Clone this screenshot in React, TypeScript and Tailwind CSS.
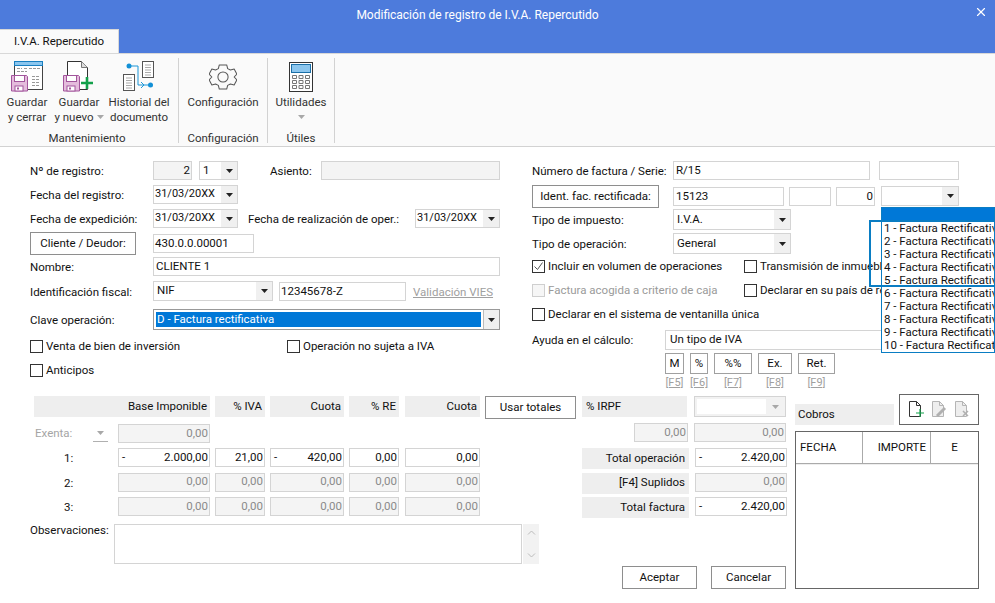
import React from "react";
import { X } from "lucide-react";

const font = { fontFamily: 'Roboto, "Noto Sans", sans-serif' };

type P = { className?: string; children?: React.ReactNode };

const Arrow = ({ light }: { light?: boolean }) => (
  <svg width="7" height="4" viewBox="0 0 7 4" className="shrink-0">
    <path d="M0 0h7L3.5 4z" fill={light ? "#a8a8a8" : "#222"} />
  </svg>
);

const Label = ({ className = "", children }: P) => (
  <span className={`whitespace-nowrap text-[#111] ${className}`}>{children}</span>
);

const Input = ({ className = "", children, off }: P & { off?: boolean }) => (
  <div
    className={`flex h-[19px] shrink-0 items-center justify-between overflow-hidden border border-[#d4d4d4] px-[1px] leading-none ${
      off ? "bg-[#f4f4f4] text-[#8a8a8a]" : "bg-white text-[#111]"
    } ${className}`}
  >
    {children}
  </div>
);

const Num = ({ className = "", off, sign, children }: P & { off?: boolean; sign?: boolean }) => (
  <Input className={className} off={off}>
    <span className="pl-[2px]">{sign ? "-" : ""}</span>
    <span>{children}</span>
  </Input>
);

const Select = ({ className = "", children }: P) => (
  <div className={`flex shrink-0 items-stretch border border-[#d4d4d4] bg-white ${className}`}>
    <div className="flex flex-1 items-center overflow-hidden pl-[3px] text-[#111]">{children}</div>
    <div className="flex w-[16px] items-center justify-center bg-[#f0f0f0]">
      <Arrow />
    </div>
  </div>
);

const DateSelect = () => (
  <Select className="h-[19px] w-[85px]">
    <span className="-ml-[2px] text-[11px]">31/03/20XX</span>
  </Select>
);

const Btn = ({ className = "", children }: P) => (
  <div
    className={`flex shrink-0 items-center justify-center border border-[#8e8e8e] bg-white whitespace-nowrap text-[#111] ${className}`}
  >
    {children}
  </div>
);

const Check = ({ checked, off, className = "", children }: P & { checked?: boolean; off?: boolean }) => (
  <div className={`flex items-center gap-[3px] ${className}`}>
    <div
      className={`flex h-[13px] w-[13px] shrink-0 items-center justify-center border ${
        off ? "border-[#cfcfcf] bg-[#f6f6f6]" : "border-[#333] bg-white"
      }`}
    >
      {checked && (
        <svg width="11" height="11" viewBox="0 0 11 11">
          <path d="M1.5 5.5l3 3 5-7" fill="none" stroke="#555" strokeWidth="1" />
        </svg>
      )}
    </div>
    <span className={`whitespace-nowrap ${off ? "text-[#9a9a9a]" : "text-[#111]"}`}>{children}</span>
  </div>
);

const Head = ({ className = "", children }: P) => (
  <div className={`flex h-[21px] shrink-0 items-center justify-end bg-[#eeeeee] pr-[3px] text-[#111] ${className}`}>
    {children}
  </div>
);

const Floppy = ({ x, y }: { x: number; y: number }) => (
  <g transform={`translate(${x} ${y})`}>
    <path d="M.5.5h15l1 1v14.5H.5z" fill="#e4bcdc" stroke="#a2559c" />
    <rect x="3.5" y=".5" width="10" height="6" fill="#fff" stroke="#a2559c" />
    <rect x="4" y="11" width="8" height="5" fill="#fff" stroke="#a2559c" />
    <rect x="6" y="12.5" width="2" height="2" fill="#a2559c" />
  </g>
);

const IconSaveClose = () => (
  <svg width="32" height="31" viewBox="0 0 32 31">
    <rect x="3.5" y=".5" width="28" height="28" fill="#fff" stroke="#444" />
    <rect x="3" y="0" width="29" height="5" fill="#1a7fc0" />
    <rect x="4" y="1" width="27" height="3" fill="#8cc6ee" />
    <path d="M6 7.5h5M13 7.5h3M18 7.5h11M6 10.5h10M21 15.5h8M21 18.5h8M21 21.5h8M21 24.5h8" stroke="#999" strokeDasharray="3 1" />
    <Floppy x={0} y={14} />
  </svg>
);

const IconSaveNew = () => (
  <svg width="32" height="31" viewBox="0 0 32 31">
    <path d="M4.5 15V.5h14l6 6V28.5H16" fill="#fff" stroke="#333" />
    <path d="M18.5.5v6h6" fill="#ddd" stroke="#777" />
    <Floppy x={0} y={14} />
    <path d="M18 22h12M24 16v12" stroke="#13a14b" strokeWidth="2.600" />
  </svg>
);

const IconHistory = () => (
  <svg width="32" height="31" viewBox="0 0 32 31">
    <path d="M6 5h9v19h12" fill="none" stroke="#1b96d8" />
    <circle cx="6" cy="5" r="2.500" fill="#1290d6" />
    <circle cx="27.500" cy="24" r="2.500" fill="#1290d6" />
    <path d="M18 21l3 3-3 3" fill="none" stroke="#1b96d8" />
    <rect x="19.500" y=".5" width="11" height="16" fill="#fff" stroke="#555" />
    <path d="M22 4h6M22 6.500h6M22 9h6M22 11.500h6M22 14h6" stroke="#aaa" />
    <rect x="0.500" y="13.500" width="11" height="16" fill="#fff" stroke="#555" />
    <path d="M3 17h6M3 19.500h6M3 22h6M3 24.500h6M3 27h6" stroke="#aaa" />
  </svg>
);

const IconGear = () => (
  <svg width="28" height="26" viewBox="0 0 30 28" fill="none" stroke="#555" strokeWidth="1.100">
    <path d="M11 1h8l1 4 3 1.500 4-1 3 5.500-3 3 3 3-3 5.500-4-1-3 1.500-1 4h-8l-1-4-3-1.500-4 1L0 17l3-3-3-3 3-5.500 4 1L10 5z" strokeLinejoin="round" />
    <circle cx="15" cy="14" r="5.500" />
  </svg>
);

const IconCalc = () => (
  <svg width="24" height="30" viewBox="0 0 24 30">
    <rect x=".5" y=".5" width="23" height="29" fill="#fff" stroke="#333" />
    <rect x="2.500" y="2.500" width="19" height="8" fill="#8cc6ee" stroke="#1a6fa8" />
    <path d="M3.500 13.500h4v3h-4zM10 13.500h4v3h-4zM16.500 13.500h4v3h-4zM3.500 18.500h4v3h-4zM10 18.500h4v3h-4zM16.500 18.500h4v3h-4zM3.500 23.500h4v3h-4zM10 23.500h4v3h-4zM16.500 23.500h4v3h-4z" fill="#fff" stroke="#777" />
  </svg>
);

const DocIcon = ({ mark, off }: { mark: "plus" | "pen" | "x"; off?: boolean }) => (
  <svg width="17" height="17" viewBox="0 0 17 17">
    <path d="M1.500.5h7l4 4v11h-11z" fill={off ? "#eee" : "#fff"} stroke={off ? "#b5b5b5" : "#333"} />
    <path d="M8.500.5v4h4" fill="none" stroke={off ? "#b5b5b5" : "#333"} />
    {mark === "plus" && <path d="M8 12h8M12 8v8" stroke="#13a14b" strokeWidth="1.200" />}
    {mark === "pen" && <path d="M6 15l8-8" stroke="#b0b0b0" strokeWidth="3" />}
    {mark === "x" && <path d="M9 10l5 5M14 10l-5 5" stroke="#b0b0b0" strokeWidth="1.500" />}
  </svg>
);

const RibbonBtn = ({ icon, className = "", children }: P & { icon: React.ReactNode }) => (
  <div className={`flex flex-col items-center text-center text-[#333] ${className}`}>
    <div className="flex h-[36px] items-center pt-[1px]">{icon}</div>
    <div className="mt-[0.500px] leading-[15px] whitespace-nowrap">{children}</div>
  </div>
);

const RibbonGroup = ({ title, className = "", children }: P & { title: string }) => (
  <div className={`flex h-[85px] flex-col border-r border-[#d2d2d2] ${className}`}>
    <div className="flex flex-1 justify-center">{children}</div>
    <div className="text-center leading-[10px] text-[#333]">{title}</div>
  </div>
);

const items = [1, 2, 3, 4, 5, 6, 7, 8, 9];

export default function App() {
  return (
    <div className="relative h-[603px] w-[995px] overflow-hidden bg-white text-[11.5px]" style={font}>
      {/* barra de titulo */}
      <div className="relative h-[29px] bg-[#4d7bdc]">
        <div className="pr-[40px] pt-[9px] text-center text-[12px] leading-none text-white">
          Modificación de registro de I.V.A. Repercutido
        </div>
        <div className="absolute right-[7px] top-[5px] flex text-white">
          <X size={14} strokeWidth={2} />
        </div>
      </div>
      <div className="flex h-[24px] bg-[#4d7bdc]">
        <div className="flex w-[119px] items-center justify-center border-t border-r border-[#d8d8d8] bg-[#fafafa] text-[#111]">
          I.V.A. Repercutido
        </div>
      </div>

      {/* ribbon */}
      <div className="flex h-[94px] items-start border-b border-[#d2d2d2] border-t border-t-[#d8d8d8] bg-[#fafafa] pt-[4px]">
        <RibbonGroup title="Mantenimiento" className="w-[179px] pr-[4px]">
          <RibbonBtn icon={<IconSaveClose />} className="w-[52px]">
            Guardar
            <br />y cerrar
          </RibbonBtn>
          <RibbonBtn icon={<IconSaveNew />} className="w-[52px]">
            Guardar
            <br />
            <span className="inline-flex items-center gap-[3px]">
              y nuevo <Arrow light />
            </span>
          </RibbonBtn>
          <RibbonBtn icon={<IconHistory />} className="w-[68px]">
            Historial del
            <br />
            documento
          </RibbonBtn>
        </RibbonGroup>
        <RibbonGroup title="Configuración" className="w-[89px]">
          <RibbonBtn icon={<IconGear />}>Configuración</RibbonBtn>
        </RibbonGroup>
        <RibbonGroup title="Útiles" className="w-[67px]">
          <RibbonBtn icon={<IconCalc />}>
            Utilidades
            <div className="flex h-[15px] items-center justify-center">
              <Arrow light />
            </div>
          </RibbonBtn>
        </RibbonGroup>
      </div>

      {/* datos */}
      <div className="flex pt-[14px]">
        <div className="ml-[30px] flex w-[470px] flex-col">
          <div className="flex h-[24px] items-start">
            <Label className="mt-[2px] w-[123px]">Nº de registro:</Label>
            <Num className="w-[39px] text-[#111]" off>
              2
            </Num>
            <Select className="ml-[7px] h-[19px] w-[39px]">1</Select>
            <Label className="ml-[32px] mt-[2px] w-[51px]">Asiento:</Label>
            <Input className="w-[179px]" off />
          </div>
          <div className="flex h-[24px] items-start">
            <Label className="mt-[2px] w-[123px]">Fecha del registro:</Label>
            <DateSelect />
          </div>
          <div className="flex h-[21px] items-start">
            <Label className="mt-[2px] w-[123px]">Fecha de expedición:</Label>
            <DateSelect />
            <Label className="ml-[10px] mt-[2px] w-[167px]">Fecha de realización de oper.:</Label>
            <DateSelect />
          </div>
          <div className="flex h-[27px] items-center">
            <Btn className="h-[23px] w-[106px]">Cliente / Deudor:</Btn>
            <Input className="ml-[17px] w-[101px]">430.0.0.00001</Input>
          </div>
          <div className="flex h-[24px] items-start">
            <Label className="mt-[2px] w-[123px]">Nombre:</Label>
            <Input className="w-[347px] pl-[2px]">CLIENTE 1</Input>
          </div>
          <div className="flex h-[28px] items-start">
            <Label className="mt-[3px] w-[123px]">Identificación fiscal:</Label>
            <Select className="h-[20px] w-[120px]">NIF</Select>
            <Input className="ml-[6px] mt-[1px] w-[127px]">12345678-Z</Input>
            <span className="ml-[7px] mt-[3px] whitespace-nowrap text-[#a0a0a0] underline">Validación VIES</span>
          </div>
          <div className="flex h-[29px] items-start">
            <Label className="mt-[3px] w-[123px]">Clave operación:</Label>
            <div className="flex h-[21px] w-[347px] items-stretch border border-[#999] bg-white">
              <div className="m-[2px] flex flex-1 items-center bg-[#0078d7] pl-[1px] text-white">
                D - Factura rectificativa
              </div>
              <div className="flex w-[16px] items-center justify-center border-l border-[#bbb] bg-[#f0f0f0]">
                <Arrow />
              </div>
            </div>
          </div>
          <div className="flex h-[24px] items-start">
            <Check className="w-[257px]">Venta de bien de inversión</Check>
            <Check>Operación no sujeta a IVA</Check>
          </div>
          <Check>Anticipos</Check>
        </div>

        <div className="ml-[32px] flex flex-col">
          <div className="flex h-[24px] items-start">
            <Label className="mt-[2px] w-[141px]">Número de factura / Serie:</Label>
            <Input className="w-[197px] pl-[2px]">R/15</Input>
            <Input className="ml-[9px] w-[80px]" />
          </div>
          <div className="flex h-[24px] items-start">
            <Btn className="h-[23px] w-[127px]">Ident. fac. rectificada:</Btn>
            <Input className="ml-[14px] mt-[2px] w-[111px] pl-[2px]">15123</Input>
            <Input className="ml-[5px] mt-[2px] w-[42px]" />
            <Input className="ml-[5px] mt-[2px] w-[39px] justify-end">0</Input>
            <Select className="ml-[6px] mt-[1px] h-[20px] w-[78px]" />
          </div>
          <div className="flex h-[24px] items-start">
            <Label className="mt-[3px] w-[141px]">Tipo de impuesto:</Label>
            <Select className="h-[21px] w-[118px]">I.V.A.</Select>
          </div>
          <div className="flex h-[25px] items-start">
            <Label className="mt-[3px] w-[141px]">Tipo de operación:</Label>
            <Select className="h-[21px] w-[118px]">General</Select>
          </div>
          <div className="flex h-[24px] items-start">
            <Check checked className="w-[212px]">
              Incluir en volumen de operaciones
            </Check>
            <Check>Transmisión de inmuebles</Check>
          </div>
          <div className="flex h-[24px] items-start">
            <Check off className="w-[212px]">
              Factura acogida a criterio de caja
            </Check>
            <Check>Declarar en su país de residencia</Check>
          </div>
          <div className="flex h-[24px] items-start">
            <Check>Declarar en el sistema de ventanilla única</Check>
          </div>
          <div className="flex h-[23px] items-start">
            <Label className="mt-[2px] w-[133px]">Ayuda en el cálculo:</Label>
            <div className="flex h-[20px] w-[230px] items-center border border-[#d4d4d4] pl-[4px] text-[#111]">
              Un tipo de IVA
            </div>
          </div>
          <div className="ml-[133px] flex gap-[6px]">
            {[
              ["M", "[F5]", "w-[19px]"],
              ["%", "[F6]", "w-[18px]"],
              ["%%", "[F7]", "w-[38px]"],
              ["Ex.", "[F8]", "w-[34px]"],
              ["Ret.", "[F9]", "w-[37px]"],
            ].map(([t, k, w]) => (
              <div key={k} className={`flex flex-col items-center ${w}`}>
                <Btn className="h-[21px] w-full border-[#a0a0a0]">{t}</Btn>
                <span className="mt-[2px] text-[11px] leading-[14px] text-[#a0a0a0] underline">{k}</span>
              </div>
            ))}
          </div>
        </div>
      </div>

      {/* importes */}
      <div className="absolute left-0 top-[394px] flex w-full">
        <div className="ml-[34px] flex w-[542px] flex-col">
          <div className="mt-[2px] flex gap-[5px]">
            <Head className="w-[176px]">Base Imponible</Head>
            <Head className="w-[50px]">% IVA</Head>
            <Head className="w-[74px]">Cuota</Head>
            <Head className="w-[50px]">% RE</Head>
            <Head className="ml-[1px] w-[75px]">Cuota</Head>
            <Btn className="h-[23px] w-[91px]">Usar totales</Btn>
          </div>
          <div className="mt-[5px] flex h-[24px] items-start">
            <span className="ml-[1px] mt-[1px] w-[58px] text-[#a5a5a5]">Exenta:</span>
            <div className="flex h-[18px] w-[15px] items-center justify-center border-b border-[#b0b0b0]">
              <Arrow light />
            </div>
            <Num className="ml-[10px] w-[92px]" off>
              0,00
            </Num>
          </div>
          {[1, 2, 3].map((n) => (
            <div key={n} className={`flex items-start gap-[5px] ${n === 3 ? "h-[25px]" : "h-[24.500px]"}`}>
              <Label className="mt-[2px] w-[79px] pl-[30px]">{n}:</Label>
              <Num className="w-[92px]" off={n > 1} sign={n === 1}>
                {n === 1 ? "2.000,00" : "0,00"}
              </Num>
              <Num className="w-[50px]" off={n > 1}>
                {n === 1 ? "21,00" : "0,00"}
              </Num>
              <Num className="w-[74px]" off={n > 1} sign={n === 1}>
                {n === 1 ? "420,00" : "0,00"}
              </Num>
              <Num className="w-[50px]" off={n > 1}>
                0,00
              </Num>
              <Num className="ml-[1px] w-[75px]" off={n > 1}>
                0,00
              </Num>
            </div>
          ))}
        </div>

        <div className="ml-[6px] flex w-[204px] flex-col">
          <div className="mt-[2px] flex gap-[7px]">
            <Head className="w-[105px] justify-start pl-[4px]">% IRPF</Head>
            <div className="flex h-[21px] w-[92px] items-center justify-between border border-[#d4d4d4] bg-[#f2f2f2] px-[2px]">
              <div className="h-[15px] w-[69px] bg-white" />
              <span className="pr-[4px]">
                <Arrow light />
              </span>
            </div>
          </div>
          <div className="mt-[6px] flex h-[25px] items-start justify-end gap-[6px]">
            <Num className="w-[54px]" off>
              0,00
            </Num>
            <Num className="w-[92px]" off>
              0,00
            </Num>
          </div>
          {[
            ["Total operación", "2.420,00", true, true],
            ["[F4] Suplidos", "0,00", false, false],
            ["Total factura", "2.420,00", true, false],
          ].map(([t, v, on, gray], i) => (
            <div key={String(t)} className={`flex items-start gap-[6px] ${i === 2 ? "h-[25px]" : "h-[24.500px]"}`}>
              <Head className="h-[19px] w-[107px] pr-[4px]">{t}</Head>
              <Num className={`w-[92px] ${gray ? "bg-[#f4f4f4]" : ""}`} off={!on} sign={!!on}>
                {v}
              </Num>
            </div>
          ))}
        </div>

        <div className="ml-[9px] flex w-[184px] flex-col">
          <div className="flex items-end gap-[5px]">
            <div className="flex h-[21px] w-[99px] items-center bg-[#eeeeee] pl-[3px] text-[#111]">Cobros</div>
            <div className="flex h-[31px] w-[80px] items-center justify-center gap-[6px] border border-[#666]">
              <DocIcon mark="plus" />
              <DocIcon mark="pen" off />
              <DocIcon mark="x" off />
            </div>
          </div>
          <div className="mt-[6px] h-[158px] border border-[#666]">
            <div className="flex h-[32px] items-center border-b border-[#aaa] text-[#111] shadow-[0_1px_0_#eee]">
              <div className="flex h-full w-[67px] items-center border-r border-[#aaa] pl-[4px]">FECHA</div>
              <div className="flex h-full w-[68px] items-center justify-end border-r border-[#aaa] pr-[4px]">IMPORTE</div>
              <div className="flex h-full flex-1 items-center justify-center">E</div>
            </div>
          </div>
        </div>
      </div>

      {/* observaciones */}
      <div className="absolute left-[30px] top-[524px] flex w-[756px] items-start">
        <Label className="-mt-[2px] w-[84px]">Observaciones:</Label>
        <div className="h-[40px] w-[408px] border border-[#d4d4d4] bg-white" />
        <div className="ml-[1px] flex h-[40px] w-[16px] flex-col items-center justify-between bg-[#f2f2f2] py-[6px]">
          <svg width="9" height="5" viewBox="0 0 9 5">
            <path d="M1 4.500l3.500-3.500 3.500 3.500" fill="none" stroke="#bbb" />
          </svg>
          <svg width="9" height="5" viewBox="0 0 9 5">
            <path d="M1 .5l3.500 3.500 3.500-3.500" fill="none" stroke="#bbb" />
          </svg>
        </div>
      </div>
      <div className="absolute left-[622px] top-[566px] flex gap-[14px]">
        <Btn className="h-[23px] w-[75px] bg-[#fafafa]">Aceptar</Btn>
        <Btn className="h-[23px] w-[75px] bg-[#fafafa]">Cancelar</Btn>
      </div>

      {/* lista desplegada */}
      <div className="absolute left-[881px] top-[207px] h-[146px] w-[114px] overflow-hidden border border-[#0a7dc3] bg-white leading-[13px] text-[#111]">
        <div className="mb-[1px] h-[13px] bg-[#0078d7]" />
        {items.map((n) => (
          <div key={n} className="whitespace-nowrap pl-[2px]">
            {n} - Factura Rectificativa
          </div>
        ))}
        <div className="whitespace-nowrap pl-[2px]">10 - Factura Rectificativa</div>
      </div>
      <div className="absolute left-[869px] top-[220px] h-[67px] w-[140px] border-2 border-[#0a7dc3]" />
    </div>
  );
}
